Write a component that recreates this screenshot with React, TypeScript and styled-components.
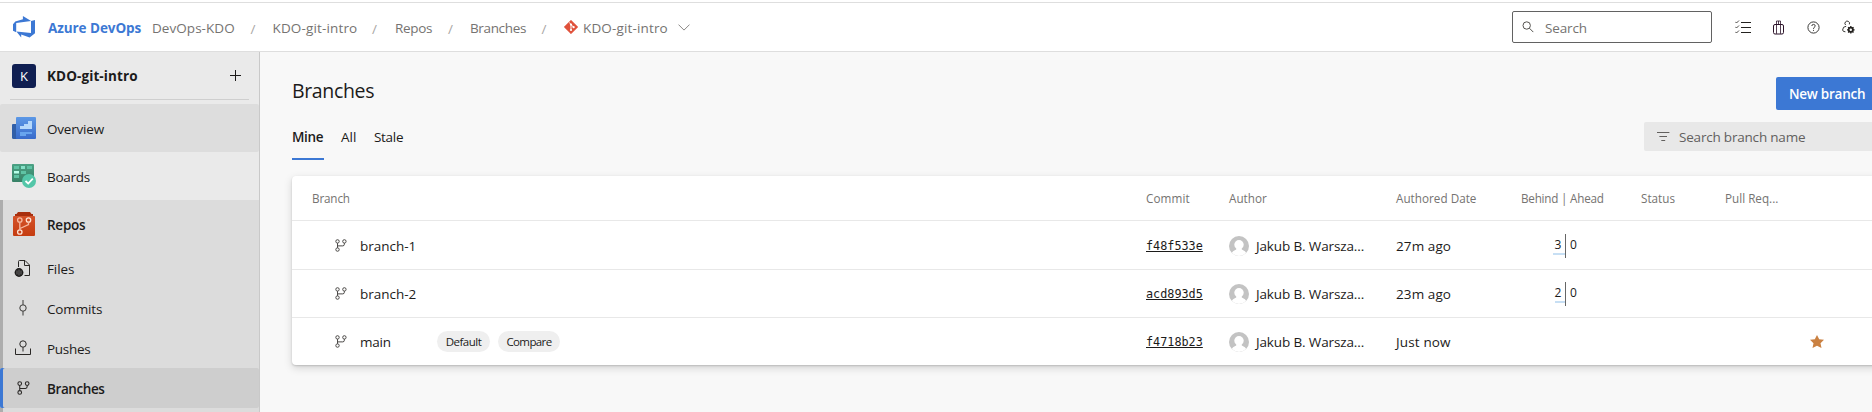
import React from "react";
import styled, { createGlobalStyle } from "styled-components";

const GlobalStyle = createGlobalStyle`
  * { box-sizing: border-box; }
  body {
    margin: 0;
    overflow: hidden;
    background: #f8f8f8;
    font-family: "Open Sans", "Noto Sans", sans-serif;
    font-size: 13.5px;
    color: #1c1b1a;
  }
  svg { display: block; flex: none; }
`;

const Page = styled.div`
  width: 1872px;
  height: 412px;
  display: flex;
  flex-direction: column;
  overflow: hidden;
`;

const Text = styled.span<{ $track?: number; $weight?: number }>`
  letter-spacing: ${(p) => p.$track ?? 0}px;
  font-weight: ${(p) => p.$weight ?? 400};
  line-height: 20px;
  white-space: nowrap;
`;

/* Top bar */

const TopBar = styled.header`
  height: 52px;
  flex: none;
  display: flex;
  align-items: center;
  padding: 3px 17px 0 13px;
  background: #fff;
  border-bottom: 1px solid #dedede;
  box-shadow: inset 0 2px #fff, inset 0 3px #dedede;
`;

const Brand = styled.div`
  width: 139px;
  display: flex;
  align-items: center;
  gap: 13px;
  color: #3c78d4;
  span { padding-top: 2px; }
`;

const Crumb = styled.div<{ $width: number }>`
  width: ${(p) => p.$width}px;
  display: flex;
  align-items: center;
  gap: 5px;
  color: #757371;
  span { padding-top: 2px; }
`;

const Slash = styled.div<{ $width?: number }>`
  width: ${(p) => p.$width ?? 22}px;
  padding-top: 3px;
  color: #a9a7a5;
`;

const SearchBox = styled.div`
  width: 200px;
  height: 32px;
  margin-left: auto;
  display: flex;
  align-items: center;
  gap: 11px;
  padding-left: 9px;
  border: 1px solid #626262;
  border-radius: 2px;
  color: #757371;
  span { padding-top: 2px; }
`;

const TopIcons = styled.div`
  width: 120px;
  margin-left: 23px;
  display: flex;
  align-items: center;
  justify-content: space-between;
`;

/* Sidebar */

const Body = styled.div`
  flex: 1;
  min-height: 0;
  display: flex;
`;

const Sidebar = styled.nav`
  width: 260px;
  flex: none;
  background: #eaeaea;
  border-right: 1px solid #c9c9c9;
`;

const Project = styled.div`
  height: 48px;
  margin: 0 10px 4px;
  padding: 0 8px 0 2px;
  display: flex;
  align-items: center;
  gap: 11px;
  border-bottom: 1px solid #cfcfcf;
  svg { margin-left: auto; }
`;

const ProjectTile = styled.div`
  width: 24px;
  height: 24px;
  border-radius: 3px;
  display: grid;
  place-items: center;
  background: #101f52;
  color: #fff;
  font-size: 13px;
  line-height: 24px;
`;

const NavItem = styled.div<{ $bg?: string; $bar?: string; $small?: boolean }>`
  height: ${(p) => (p.$small ? 40 : 48)}px;
  padding-right: 12px;
  display: flex;
  align-items: center;
  border-radius: 2px;
  background: ${(p) => p.$bg ?? "transparent"};
  box-shadow: inset ${(p) => (p.$bar ? 3 : 0)}px 0 ${(p) => p.$bar ?? "transparent"};
  > span { padding-top: 2px; }
`;

const NavIcon = styled.div<{ $indent?: number }>`
  width: 47px;
  padding-left: ${(p) => p.$indent ?? 12}px;
`;

const NavGroup = styled.div`
  height: 212px;
  background: #dcdcdc;
  box-shadow: inset 3px 0 #adadad;
`;

/* Content */

const Main = styled.main`
  flex: 1;
  min-width: 0;
  padding-left: 32px;
`;

const TitleRow = styled.div`
  height: 70px;
  padding-top: 25px;
  display: flex;
  justify-content: space-between;
`;

const Title = styled.h1`
  margin: 0;
  font-size: 19.5px;
  font-weight: 500;
  line-height: 28px;
  letter-spacing: -0.35px;
`;

const NewButton = styled.button`
  width: 96px;
  height: 33px;
  padding: 0 0 0 13px;
  text-align: left;
  border: 0;
  border-radius: 2px 0 0 2px;
  background: #3c78d4;
  color: #fff;
  font: inherit;
`;

const TabRow = styled.div`
  height: 38px;
  display: flex;
  justify-content: space-between;
`;

const Tabs = styled.div`
  display: flex;
  gap: 17px;
`;

const Tab = styled.div<{ $active?: boolean; $width: number }>`
  width: ${(p) => p.$width}px;
  height: 38px;
  padding-top: 5px;
  border-bottom: 2px solid ${(p) => (p.$active ? "#3c78d4" : "transparent")};
`;

const Filter = styled.div`
  width: 228px;
  height: 29px;
  padding-left: 13px;
  display: flex;
  align-items: center;
  gap: 9px;
  border-radius: 2px 0 0 2px;
  background: #e8e8e8;
  color: #62605e;
`;

const Card = styled.section`
  width: 1588px;
  height: 189px;
  margin-top: 16px;
  background: #fff;
  border-radius: 4px 0 0 4px;
  box-shadow: 0 3px 8px rgba(0, 0, 0, 0.15), 0 1px 2px rgba(0, 0, 0, 0.16);
`;

const Row = styled.div<{ $height: number; $last?: boolean; $top?: number }>`
  height: ${(p) => p.$height}px;
  padding: ${(p) => p.$top ?? 0}px 0 0 20px;
  display: grid;
  grid-template-columns: 834px 83px 167px 125px 120px 84px 140px;
  align-items: center;
  border-bottom: ${(p) => (p.$last ? 0 : 1)}px solid #e8e8e8;
`;

const HeadRow = styled(Row)`
  color: #757371;
  font-size: 11.7px;
  font-weight: 500;
`;

const NameCell = styled.div`
  display: flex;
  align-items: center;
  padding-left: 23px;
`;

const Name = styled.div`
  width: 77px;
  margin-left: 13px;
`;

const Pill = styled.span<{ $width: number }>`
  width: ${(p) => p.$width}px;
  height: 21px;
  margin-right: 8px;
  border-radius: 11px;
  background: #efefef;
  font-size: 11.5px;
  display: flex;
  align-items: center;
  justify-content: center;
`;

const Sha = styled.a`
  font-family: "DejaVu Sans Mono", monospace;
  font-size: 11.8px;
  line-height: 20px;
  text-decoration: underline;
  text-decoration-thickness: 1px;
  text-underline-offset: 1px;
`;

const Author = styled.div`
  display: flex;
  align-items: center;
  gap: 7px;
`;

const Divergence = styled.div`
  height: 24px;
  display: grid;
  grid-template-columns: 45px 1fr;
  font-size: 12px;
`;

const Behind = styled.div`
  display: flex;
  justify-content: flex-end;
  border-right: 1px solid #666;
`;

const Count = styled.span<{ $width: number }>`
  width: ${(p) => p.$width}px;
  height: 21px;
  padding-right: 4px;
  display: flex;
  justify-content: flex-end;
  line-height: 22px;
  letter-spacing: -0.3px;
  border-bottom: 2px solid #c7dff4;
`;

const Ahead = styled.span`
  padding-left: 4px;
  line-height: 22px;
`;

const StarCell = styled.div`
  grid-column: 7;
  padding-left: 85px;
`;

/* Icons */

const BranchIcon = ({ size = 12, color = "#4b4947" }) => (
  <svg width={size} height={size * 1.08} viewBox="0 0 12 13" fill="none" stroke={color}>
    <circle cx="2.5" cy="2.4" r="1.7" />
    <circle cx="9.4" cy="2.4" r="1.7" />
    <circle cx="2.5" cy="10.6" r="1.7" />
    <path d="M2.5 4.1V8.9M9.4 4.1V5.2Q9.4 6.9 7.8 6.9H2.5" />
  </svg>
);

const AzureLogo = () => (
  <svg width="22" height="22" viewBox="0 0 22 22" fill="#3c78d4">
    <path d="M22 4.1V17.2L16.6 21.6L8.2 18.6V21.6L3.4 15.6L18 16.9V4.9Z" />
    <path d="M18.1 4.9L9.9 0V3.2L2.3 5.4L0 8.3V14.8L3.2 16.2V7.1Z" />
  </svg>
);

const GitIcon = () => (
  <svg width="14" height="14" viewBox="0 0 14 14">
    <path d="M7 0.2L13.8 7L7 13.8L0.2 7Z" fill="#e0513a" stroke="#e0513a" strokeWidth="0.6" strokeLinejoin="round" />
    <path d="M5.2 2.6L7 4.4V10M7 4.6L9.6 7.2" stroke="#fff" fill="none" />
    <circle cx="7" cy="4.6" r="1.1" fill="#fff" />
    <circle cx="7" cy="10" r="1.1" fill="#fff" />
    <circle cx="9.6" cy="7.2" r="1.1" fill="#fff" />
  </svg>
);

const ChevronIcon = () => (
  <svg width="12" height="7" viewBox="0 0 12 7" fill="none" stroke="#8a8886">
    <path d="M0.5 0.6L6 6.1L11.5 0.6" />
  </svg>
);

const SearchIcon = () => (
  <svg width="12" height="12" viewBox="0 0 12 12" fill="none" stroke="#55534f">
    <circle cx="4.7" cy="4.5" r="3.7" />
    <path d="M7.4 7.2L11.3 11.1" />
  </svg>
);

const ListIcon = () => (
  <svg width="16" height="14" viewBox="0 0 16 14" fill="none" stroke="#24221f">
    <path d="M6 2.5H16M6 7.5H16M6 12.5H16" />
    <path d="M0.3 1.8L1.5 3L4 0.5M0.3 6.8L1.5 8L4 5.5M0.3 11.8L1.5 13L4 10.5" strokeWidth="0.8" />
  </svg>
);

const BagIcon = () => (
  <svg width="11" height="15" viewBox="0 0 11 15" fill="none" stroke="#2b1228">
    <path d="M2 4.5H9Q10.5 4.500 10.5 6V12.5Q10.500 14 9 14H2Q0.500 14 0.500 12.500V6Q0.500 4.500 2 4.500Z" />
    <path d="M3.5 4.5V1H7.5V4.5M5.5 1V4.5M3.5 5V13.800M7.5 5V13.8" strokeWidth="0.8" />
  </svg>
);

const HelpIcon = () => (
  <svg width="13" height="13" viewBox="0 0 13 13" fill="none" stroke="#3b3a38">
    <circle cx="6.5" cy="6.5" r="5.6" />
    <path d="M4.8 5Q4.9 3.4 6.5 3.4Q8.2 3.5 8.2 4.9Q8.1 5.8 7.2 6.4Q6.5 6.9 6.5 7.9M6.5 8.9V9.9" />
  </svg>
);

const UserGearIcon = () => (
  <svg width="13" height="14" viewBox="0 0 13 14" fill="none" stroke="#24221f">
    <path d="M7.3 4.4A2.3 2.3 0 1 0 3.6 5M4.2 6.3Q0.7 6.4 0.6 10Q0.8 11.8 3.4 11.8" strokeWidth="0.9" />
    <circle cx="8.8" cy="9.8" r="2.2" strokeWidth="1.6" />
    <path d="M8.8 6V13.600M5 9.8H12.600M6.1 7.1L11.5 12.5M11.5 7.1L6.1 12.5" strokeWidth="1.3" />
    <circle cx="8.8" cy="9.8" r="1.2" fill="#fff" stroke="none" />
  </svg>
);

const FilterIcon = () => (
  <svg width="13" height="11" viewBox="0 0 13 11" stroke="#62605e">
    <path d="M0 1.5H12.4M2.4 5.5H10M4.3 9.5H8.2" />
  </svg>
);

const PlusIcon = () => (
  <svg width="11" height="11" viewBox="0 0 11 11" stroke="#1c1b1a">
    <path d="M0 5.5H11M5.5 0V11" />
  </svg>
);

const OverviewIcon = () => (
  <svg width="24" height="22" viewBox="0 0 24 22">
    <defs>
      <linearGradient id="ov" x2="0" y2="1">
        <stop stopColor="#5c98e6" />
        <stop offset="1" stopColor="#386bcb" />
      </linearGradient>
    </defs>
    <path d="M1 7H5V22H1.5Q0 22 0 20.5V8Q0 7 1 7Z" fill="#315fa8" />
    <rect x="4" width="20" height="22" rx="1" fill="url(#ov)" />
    <path d="M8 9H12V7H16V4H20V12H8Z" fill="#b5d8fb" />
    <path d="M8 15H20V17H14V19H8Z" fill="#67a4ee" />
  </svg>
);

const BoardsIcon = () => (
  <svg width="24" height="24" viewBox="0 0 24 24">
    <defs>
      <linearGradient id="bd" x2="0" y2="1">
        <stop stopColor="#4ba184" />
        <stop offset="1" stopColor="#388267" />
      </linearGradient>
    </defs>
    <rect width="22" height="18" rx="1" fill="url(#bd)" />
    <path d="M2 2H7V5H2ZM15 2H20V5H15ZM9 7H14V10H9ZM2 11H7V14H2Z" fill="#5fc3a4" />
    <path d="M9 2H13V5H9Z" fill="#85e0c7" />
    <path d="M2 7H7V9.5H2Z" fill="#b7ffe8" />
    <circle cx="17" cy="17" r="7" fill="#53c6a8" />
    <path d="M13.5 17L16.2 19.5L20.8 14.7" fill="none" stroke="#fff" strokeWidth="1.8" />
  </svg>
);

const ReposIcon = () => (
  <svg width="24" height="24" viewBox="0 0 24 24" fill="none">
    <defs>
      <linearGradient id="rp" x2="0" y2="1">
        <stop stopColor="#d4532a" />
        <stop offset="1" stopColor="#c53c10" />
      </linearGradient>
    </defs>
    <path d="M6 0H18L19.5 2H21V5H3V2H4.5Z" fill="#a8300f" />
    <rect x="1" y="4" width="22" height="20" rx="1" fill="url(#rp)" />
    <g stroke="#f6b9a0" strokeWidth="1.3">
      <circle cx="7.8" cy="8" r="2.2" />
      <circle cx="16.5" cy="8" r="2.2" stroke="#ffe3d5" />
      <circle cx="7.8" cy="20" r="2.2" stroke="#ffe3d5" />
      <path d="M7.8 10.2V17.8M16.5 10.2V12.5L8 16.5" />
    </g>
  </svg>
);

const FilesIcon = () => (
  <svg width="17" height="17" viewBox="0 0 17 17" fill="none" stroke="#2a2826">
    <path d="M4.5 7V1.500Q4.5 0.500 5.500 0.500H11L15.5 5V15.500H10.5M10.500 0.500V5.500H15.5" />
    <circle cx="5" cy="12.5" r="4.4" fill="#1c1b1a" stroke="none" />
    <path d="M3 10.500V14.500M5 9.500V15.500M7 10.500V14.500" stroke="#aaa" strokeWidth="0.6" />
  </svg>
);

const CommitsIcon = () => (
  <svg width="18" height="16" viewBox="0 0 18 16" fill="none" stroke="#3b3a38">
    <circle cx="11" cy="8" r="3.2" />
    <path d="M11 0V4.8M11 11.2V15.5" />
  </svg>
);

const PushesIcon = () => (
  <svg width="20" height="16" viewBox="0 0 20 16" fill="none" stroke="#2a2826">
    <circle cx="11" cy="4" r="3.2" />
    <path d="M11 7.2V11.5M3.5 8.5V14.5H18.5V8.5" />
  </svg>
);

const AvatarIcon = () => (
  <svg width="20" height="20" viewBox="0 0 20 20">
    <clipPath id="av">
      <circle cx="10" cy="10" r="10" />
    </clipPath>
    <g clipPath="url(#av)">
      <rect width="20" height="20" fill="#c3c3c3" />
      <circle cx="10" cy="8.8" r="4.7" fill="#fff" />
      <path d="M7.500 11H12.500L12.8 13.500Q16.5 14.500 18 18V20H2V18Q3.5 14.500 7.2 13.500Z" fill="#fff" />
    </g>
  </svg>
);

const StarIcon = () => (
  <svg width="14" height="13" viewBox="0 0 14 13" fill="#ca8142">
    <path d="M7 0L9.200 4.2L14 4.800L10.5 8.2L11.5 13L7 10.8L2.5 13L3.5 8.2L0 4.800L4.800 4.2Z" />
  </svg>
);

/* Data */

const columns = [
  { label: "Branch", track: -0.15 },
  { label: "Commit", track: 0.1 },
  { label: "Author", track: 0 },
  { label: "Authored Date", track: 0.02 },
  { label: "Behind | Ahead", track: -0.22 },
  { label: "Status", track: 0 },
  { label: "Pull Req...", track: 0 },
];

const branches = [
  { name: "branch-1", track: -0.02, sha: "f48f533e", date: "27m ago", dateTrack: 0.1, behind: 3, width: 12 },
  { name: "branch-2", track: -0.02, sha: "acd893d5", date: "23m ago", dateTrack: 0.1, behind: 2, width: 10 },
  { name: "main", track: -0.2, sha: "f4718b23", date: "Just now", dateTrack: 0.15, main: true },
];

export default function App() {
  return (
    <Page>
      <GlobalStyle />
      <TopBar>
        <Brand>
          <AzureLogo />
          <Text $weight={700} $track={-0.07}>Azure DevOps</Text>
        </Brand>
        <Crumb $width={98.5}><Text $track={0.05}>DevOps-KDO</Text></Crumb>
        <Slash>/</Slash>
        <Crumb $width={99.5}><Text $track={0.15}>KDO-git-intro</Text></Crumb>
        <Slash $width={23}>/</Slash>
        <Crumb $width={53}><Text $track={-0.3}>Repos</Text></Crumb>
        <Slash>/</Slash>
        <Crumb $width={71.5}><Text $track={-0.35}>Branches</Text></Crumb>
        <Slash $width={22.5}>/</Slash>
        <Crumb $width={114}><GitIcon /><Text $track={0.15}>KDO-git-intro</Text></Crumb>
        <ChevronIcon />
        <SearchBox>
          <SearchIcon />
          <Text $track={-0.15}>Search</Text>
        </SearchBox>
        <TopIcons>
          <ListIcon />
          <BagIcon />
          <HelpIcon />
          <UserGearIcon />
        </TopIcons>
      </TopBar>
      <Body>
        <Sidebar>
          <Project>
            <ProjectTile>K</ProjectTile>
            <Text $weight={700} $track={0.1}>KDO-git-intro</Text>
            <PlusIcon />
          </Project>
          <NavItem $bg="#dddddd">
            <NavIcon><OverviewIcon /></NavIcon>
            <Text $track={-0.2}>Overview</Text>
          </NavItem>
          <NavItem>
            <NavIcon><BoardsIcon /></NavIcon>
            <Text $track={-0.25}>Boards</Text>
          </NavItem>
          <NavGroup>
            <NavItem>
              <NavIcon><ReposIcon /></NavIcon>
              <Text $weight={600} $track={-0.25}>Repos</Text>
            </NavItem>
            <NavItem $small>
              <NavIcon $indent={14}><FilesIcon /></NavIcon>
              <Text $track={-0.1}>Files</Text>
            </NavItem>
            <NavItem $small>
              <NavIcon><CommitsIcon /></NavIcon>
              <Text $track={-0.15}>Commits</Text>
            </NavItem>
            <NavItem $small>
              <NavIcon><PushesIcon /></NavIcon>
              <Text $track={-0.3}>Pushes</Text>
            </NavItem>
            <NavItem $small $bg="#cecece" $bar="#3c78d4">
              <NavIcon $indent={17}><BranchIcon size={13} color="#2a2826" /></NavIcon>
              <Text $weight={600} $track={-0.42}>Branches</Text>
            </NavItem>
          </NavGroup>
        </Sidebar>
        <Main>
          <TitleRow>
            <Title>Branches</Title>
            <NewButton><Text $weight={600} $track={-0.25}>New branch</Text></NewButton>
          </TitleRow>
          <TabRow>
            <Tabs>
              <Tab $active $width={32}><Text $weight={600} $track={-0.35}>Mine</Text></Tab>
              <Tab $width={16}><Text $track={0}>All</Text></Tab>
              <Tab $width={31}><Text $track={-0.3}>Stale</Text></Tab>
            </Tabs>
            <Filter>
              <FilterIcon />
              <Text $track={-0.2}>Search branch name</Text>
            </Filter>
          </TabRow>
          <Card>
            <HeadRow $height={45}>
              {columns.map((c) => (
                <Text key={c.label} $track={c.track}>{c.label}</Text>
              ))}
            </HeadRow>
            {branches.map((b, i) => (
              <Row key={b.name} $height={[49, 48, 47][i]} $top={i === 0 ? 1 : 0} $last={b.main}>
                <NameCell>
                  <BranchIcon />
                  <Name><Text $track={b.track}>{b.name}</Text></Name>
                  {b.main && (
                    <>
                      <Pill $width={53}><Text $track={-0.5}>Default</Text></Pill>
                      <Pill $width={62}><Text $track={-0.6}>Compare</Text></Pill>
                    </>
                  )}
                </NameCell>
                <Sha>{b.sha}</Sha>
                <Author>
                  <AvatarIcon />
                  <Text $track={-0.13}>Jakub B. Warsza...</Text>
                </Author>
                <Text $track={b.dateTrack}>{b.date}</Text>
                {b.main ? (
                  <StarCell><StarIcon /></StarCell>
                ) : (
                  <Divergence>
                    <Behind><Count $width={b.width ?? 10}>{b.behind}</Count></Behind>
                    <Ahead>0</Ahead>
                  </Divergence>
                )}
              </Row>
            ))}
          </Card>
        </Main>
      </Body>
    </Page>
  );
}
